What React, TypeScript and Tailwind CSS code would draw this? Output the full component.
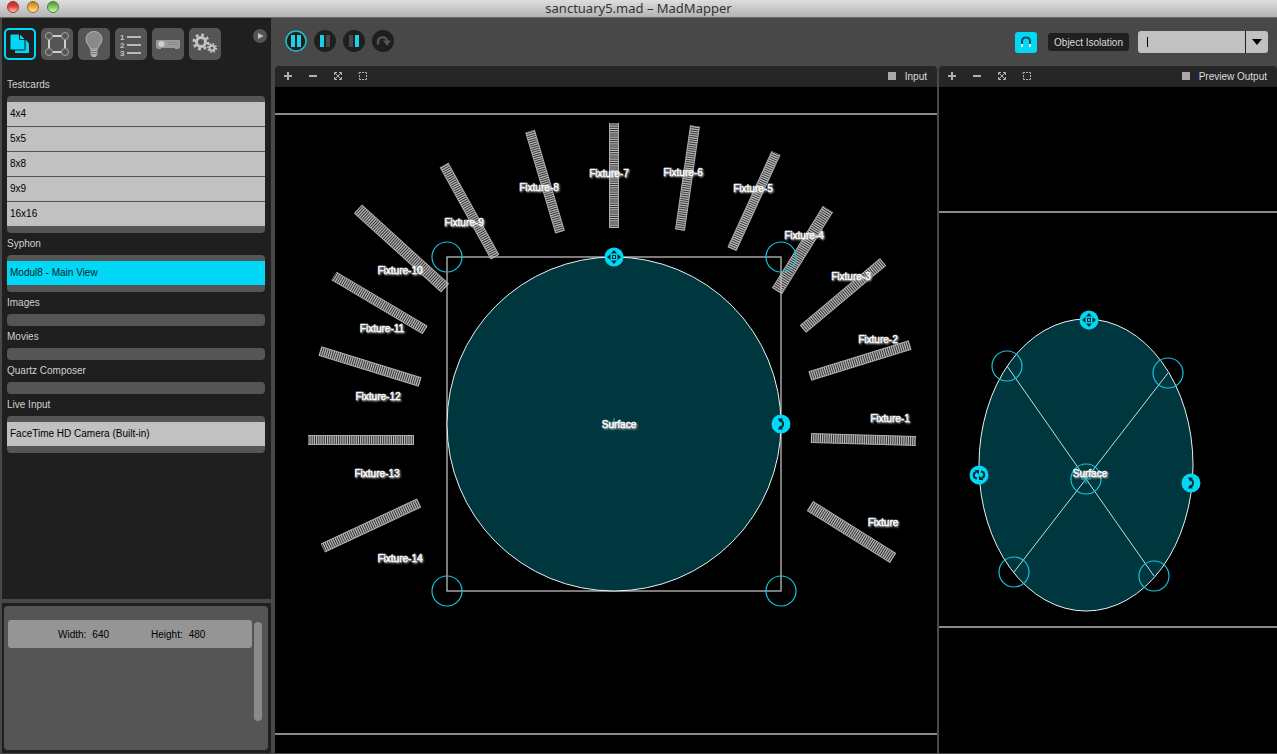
import React, { useState } from 'react';

type Fixture = {
  name: string;
  from: [number, number];
  to: [number, number];
  label: [number, number];
  thick?: number;
};

const FIXTURES: Fixture[] = [
  { name: 'Fixture', from: [810, 506], to: [893, 558], label: [883, 526], thick: 12 },
  { name: 'Fixture-1', from: [811, 438], to: [916, 441], label: [890, 422] },
  { name: 'Fixture-2', from: [810, 376], to: [910, 345], label: [878, 343] },
  { name: 'Fixture-3', from: [803, 329], to: [883, 262], label: [851, 280] },
  { name: 'Fixture-4', from: [777, 291], to: [828, 209], label: [804, 239], thick: 12 },
  { name: 'Fixture-5', from: [732, 249], to: [776, 153], label: [753, 192] },
  { name: 'Fixture-6', from: [680, 230], to: [695, 126], label: [683, 176] },
  { name: 'Fixture-7', from: [614, 228], to: [614, 123], label: [609, 177] },
  { name: 'Fixture-8', from: [560, 232], to: [530, 131], label: [539, 191] },
  { name: 'Fixture-9', from: [495, 257], to: [444, 165], label: [464, 226] },
  { name: 'Fixture-10', from: [445, 288], to: [358, 209], label: [400, 274], thick: 12 },
  { name: 'Fixture-11', from: [425, 330], to: [334, 276], label: [382, 332] },
  { name: 'Fixture-12', from: [420, 382], to: [320, 351], label: [378, 400] },
  { name: 'Fixture-13', from: [414, 440], to: [308, 440], label: [377, 477] },
  { name: 'Fixture-14', from: [419, 503], to: [323, 548], label: [400, 562] },
];

const MEDIA = [
  { title: 'Testcards', items: ['4x4', '5x5', '8x8', '9x9', '16x16'] },
  { title: 'Syphon', items: ['Modul8 - Main View'] },
  { title: 'Images', items: [] },
  { title: 'Movies', items: [] },
  { title: 'Quartz Composer', items: [] },
  { title: 'Live Input', items: ['FaceTime HD Camera (Built-in)'] },
];

const MediaIcon = () => (
  <svg viewBox="0 0 32 32" className="h-full w-full" fill="#00d8f5">
    <path d="M11 11h9l5 5v9H11z" />
    <path d="M6 6h10l5 5v11H6z" stroke="#1f1f1f" />
    <path d="M15.500 6v5.500H21" fill="none" stroke="#1f1f1f" />
    <path d="M22 12l3 3.500h-3z" />
  </svg>
);

const SurfaceIcon = () => (
  <svg viewBox="0 0 32 32" className="h-full w-full" fill="none" stroke="#cfcfcf">
    <path d="M12 8h9M12 24h9M8 12v8M24 12v8" strokeWidth="2" />
    <g stroke="#a6a6a6">
      <circle cx="8" cy="8" r="3.500" />
      <circle cx="24" cy="8" r="3.500" />
      <circle cx="8" cy="24" r="3.500" />
      <circle cx="24" cy="24" r="3.500" />
    </g>
  </svg>
);

const BulbIcon = () => (
  <svg viewBox="0 0 32 32" className="h-full w-full">
    <path
      d="M16 3.500c-4.700 0-8 3.500-8 8 0 4 3.200 5.500 4.500 9.500h7c1.300-4 4.500-5.500 4.500-9.500 0-4.500-3.300-8-8-8z"
      fill="#8a8a8a"
      stroke="#b5b5b5"
    />
    <path d="M12.500 21.500h7v5L17.500 29h-3l-2-2.500z" fill="#b5b5b5" />
    <path d="M12.500 23.500h7M12.500 25.500h7" stroke="#777" />
  </svg>
);

const ListIcon = () => (
  <svg viewBox="0 0 32 32" className="h-full w-full">
    <path d="M12 9h14M12 17h14M12 25h14" stroke="#b9b9b9" strokeWidth="2" />
    <g fill="#c4c4c4" fontSize="8" fontWeight="bold" fontFamily="Liberation Sans, sans-serif">
      <text x="5" y="12">1</text>
      <text x="5" y="20">2</text>
      <text x="5" y="28">3</text>
    </g>
  </svg>
);

const ProjectorIcon = () => (
  <svg viewBox="0 0 32 32" className="h-full w-full">
    <rect x="4" y="12" width="24" height="8" rx="1" fill="#9a9a9a" />
    <path d="M5 20h4v1H5zM23 20h4v1h-4z" fill="#9a9a9a" />
    <circle cx="9.500" cy="16" r="3" fill="#cfcfcf" />
    <path d="M16 14.500h10M16 16.500h10" stroke="#8a8a8a" />
  </svg>
);

const GearsIcon = () => (
  <svg viewBox="0 0 32 32" className="h-full w-full" fill="none" stroke="#c4c4c4">
    <circle cx="12" cy="14" r="4.500" strokeWidth="3" />
    <circle cx="12" cy="14" r="7" strokeWidth="3" strokeDasharray="2.750 2.750" />
    <circle cx="23" cy="20" r="2.500" strokeWidth="2" />
    <circle cx="23" cy="20" r="4" strokeWidth="2" strokeDasharray="1.570 1.570" />
  </svg>
);

const TOOLS = [
  { name: 'Medias', Icon: MediaIcon },
  { name: 'Surfaces', Icon: SurfaceIcon },
  { name: 'Fixtures', Icon: BulbIcon },
  { name: 'Cues', Icon: ListIcon },
  { name: 'Projectors', Icon: ProjectorIcon },
  { name: 'Preferences', Icon: GearsIcon },
];

const TitleBar = () => (
  <header className="relative h-[18px] shrink-0 border-b border-[#6a6a6a] bg-linear-to-b from-[#dedede] to-[#b4b4b4]">
    <div className="absolute left-[7px] top-px flex gap-2">
      {[
        { name: 'Close', cls: 'from-[#b02c2c] via-[#e8453f] to-[#ffc0b4] border-[#8f3a38]' },
        { name: 'Minimize', cls: 'from-[#c07c1c] via-[#f0ac40] to-[#ffeaa0] border-[#95692f]' },
        { name: 'Zoom', cls: 'from-[#4f9a35] via-[#82c862] to-[#d8f8b4] border-[#4f7f40]' },
      ].map((b) => (
        <button key={b.name} aria-label={b.name} className={`h-3 w-3 rounded-full border bg-linear-to-b ${b.cls}`} />
      ))}
    </div>
    <h1 className="text-center font-['Noto_Sans',sans-serif] text-[13px] leading-4 text-[#333]">sanctuary5.mad – MadMapper</h1>
  </header>
);

const Sidebar = () => {
  const [tool, setTool] = useState('Medias');
  const [selected, setSelected] = useState('Modul8 - Main View');

  return (
    <aside className="flex w-[269px] shrink-0 flex-col gap-1">
      <section className="flex-1 bg-[#1f1f1f] pt-[10px]">
        <div className="mb-[14px] flex items-start justify-between pl-[2px] pr-1">
          <nav className="flex gap-[5px]">
            {TOOLS.map(({ name, Icon }) => (
              <button
                key={name}
                aria-label={name}
                onClick={() => setTool(name)}
                className={
                  tool === name
                    ? 'h-8 w-8 rounded-[5px] bg-[#1f1f1f] ring-2 ring-inset ring-[#00d8f5]'
                    : 'h-8 w-8 rounded-[5px] bg-[#555]'
                }
              >
                <Icon />
              </button>
            ))}
          </nav>
          <button aria-label="Collapse" className="h-4 w-[14px]">
            <svg viewBox="0 0 14 16" className="h-full w-full">
              <circle cx="7" cy="8" r="7" fill="#555" />
              <path d="M5 5l5.500 3L5 11z" fill="#c4c4c4" />
            </svg>
          </button>
        </div>
        <div className="pl-[5px] pr-[6px]">
          {MEDIA.map((group) => (
            <div key={group.title}>
              <h2 className="h-[22px] leading-[22px] text-[#d0d0d0]">{group.title}</h2>
              {group.items.length ? (
                <ul className="divide-y divide-[#555] rounded-[4px] bg-[#555] pb-[7px] pt-[6px]">
                  {group.items.map((item) => (
                    <li key={item}>
                      <button
                        onClick={() => setSelected(item)}
                        className={
                          selected === item
                            ? 'block h-6 w-full bg-[#00d8f5] pl-[3px] text-left leading-6 text-[#06252b]'
                            : 'block h-6 w-full bg-[#c1c1c1] pl-[3px] text-left leading-6 text-black'
                        }
                      >
                        {item}
                      </button>
                    </li>
                  ))}
                </ul>
              ) : (
                <div className="h-3 rounded-[4px] bg-[#555]" />
              )}
            </div>
          ))}
        </div>
      </section>

      <section className="h-[150px] shrink-0 bg-[#1f1f1f] py-[3px] pl-[2px] pr-[3px]">
        <div className="flex h-full gap-[2px] rounded-[4px] bg-[#555] pl-1 pr-[6px]">
          <dl className="mt-[14px] flex h-7 flex-1 items-center gap-[42px] rounded-[3px] bg-[#959595] pl-[50px] text-black">
            <div className="flex gap-[6px]">
              <dt>Width:</dt>
              <dd>640</dd>
            </div>
            <div className="flex gap-[6px]">
              <dt>Height:</dt>
              <dd>480</dd>
            </div>
          </dl>
          <div className="mt-4 h-[99px] w-2 rounded-full bg-[#8a8a8a]" />
        </div>
      </section>
    </aside>
  );
};

const PauseIcon = ({ left, right, ring }: { left: boolean; right: boolean; ring?: boolean }) => (
  <svg viewBox="0 0 22 22" className="h-full w-full">
    <circle cx="11" cy="11" r={ring ? 10 : 11} fill="#1f1f1f" stroke={ring ? '#22bdd0' : 'none'} strokeWidth="1.500" />
    <rect x="6" y="5" width="4" height="12" fill={left ? '#1ccfe6' : '#484848'} />
    <rect x="12" y="5" width="4" height="12" fill={right ? '#1ccfe6' : '#484848'} />
  </svg>
);

const TopBar = () => (
  <div className="flex h-12 shrink-0 items-center justify-between pl-[10px] pr-[9px]">
    <div className="flex gap-[7px] pb-[2px]">
      <button aria-label="Pause all" className="h-[22px] w-[22px]"><PauseIcon left right ring /></button>
      <button aria-label="Pause input" className="h-[22px] w-[22px]"><PauseIcon left right={false} /></button>
      <button aria-label="Pause output" className="h-[22px] w-[22px]"><PauseIcon left={false} right /></button>
      <button aria-label="Redo" className="h-[22px] w-[22px]">
        <svg viewBox="0 0 22 22" className="h-full w-full">
          <circle cx="11" cy="11" r="11" fill="#1f1f1f" />
          <path d="M6 14.500v-2.500c0-6 8.500-6 9-1" fill="none" stroke="#555" strokeWidth="2.500" />
          <path d="M11 10.500h8L15 16z" fill="#555" />
        </svg>
      </button>
    </div>
    <div className="flex items-center">
      <button aria-label="Snap" className="mr-[11px] h-[21px] w-[22px] rounded-[3px] bg-[#00d8f5]">
        <svg viewBox="0 0 22 21" className="h-full w-full" fill="none" strokeWidth="2">
          <path d="M7 12v-2.500c0-5.300 8-5.300 8 0V12" stroke="#064f59" />
          <path d="M7 12v3M15 12v3" stroke="#fff" />
        </svg>
      </button>
      <button className="mr-[9px] h-[18px] rounded-[3px] bg-[#1f1f1f] px-[6px] text-[#dcdcdc]">Object Isolation</button>
      <div className="flex h-[22px] w-[130px] items-center overflow-hidden rounded-[3px] bg-[#c1c1c1]">
        <span className="ml-[9px] h-[10px] w-px bg-black" />
        <input aria-label="Isolated object" className="h-full min-w-0 flex-1 bg-transparent px-1 text-black outline-none" />
        <button aria-label="Show objects" className="flex h-full w-[23px] items-center justify-center border-l border-[#222]">
          <svg viewBox="0 0 10 6" className="h-[6px] w-[10px]">
            <path d="M0 0h10L5 6z" fill="#000" />
          </svg>
        </button>
      </div>
    </div>
  </div>
);

const ViewBar = ({ title }: { title: string }) => (
  <div className="flex h-[21px] shrink-0 items-center justify-between rounded-t-[4px] bg-[#262626] pb-px pl-2 pr-[10px]">
    <div className="flex gap-[15px]">
      <button aria-label="Zoom in" className="h-[10px] w-[10px]">
        <svg viewBox="0 0 10 10" className="h-full w-full" stroke="#b0b0b0" strokeWidth="2"><path d="M1 5h8M5 1v8" /></svg>
      </button>
      <button aria-label="Zoom out" className="h-[10px] w-[10px]">
        <svg viewBox="0 0 10 10" className="h-full w-full" stroke="#b0b0b0" strokeWidth="2"><path d="M1 5h8" /></svg>
      </button>
      <button aria-label="Fit to view" className="h-[10px] w-[10px]">
        <svg viewBox="0 0 10 10" className="h-full w-full" fill="none" stroke="#b0b0b0">
          <path d="M1.500 4V1.500H4M6 1.500h2.500V4M8.500 6v2.500H6M4 8.500H1.500V6M1.500 1.500l7 7M8.500 1.500l-7 7" />
        </svg>
      </button>
      <button aria-label="Fit selection" className="h-[10px] w-[10px]">
        <svg viewBox="0 0 10 10" className="h-full w-full" fill="none" stroke="#b0b0b0">
          <path d="M1 3V1.500H3M7 1.500h1.500V3M8.500 7v1.500H7M3 8.500H1.500V7M4 1.500h2M4 8.500h2M1.500 4v2M8.500 4v2" />
        </svg>
      </button>
    </div>
    <button className="flex items-center gap-[9px] text-[#dcdcdc]">
      <span className="h-2 w-2 bg-[#a9a9ab]" />
      {title}
    </button>
  </div>
);

const Ring = ({ x, y }: { x: number; y: number }) => (
  <circle cx={x} cy={y} r="15" fill="none" stroke="#14c4dc" strokeWidth="1.200" />
);

const Handle = ({ x, y, kind }: { x: number; y: number; kind: 'move' | 'scale' | 'rotate' }) => (
  <g transform={`translate(${x} ${y})`}>
    <circle r="9.500" fill="#00d8f5" />
    {kind === 'move' && (
      <g fill="#022a30">
        <rect x="-1.500" y="-1.500" width="3" height="3" fill="none" stroke="#022a30" />
        <path d="M0-7l3 3.500h-6zM0 7l3-3.500h-6zM-7 0l3.500-3v6zM7 0l-3.500-3v6z" />
      </g>
    )}
    {kind === 'scale' && (
      <g fill="#022a30">
        <path d="M-.5-3.500C1.500-3 2-1.500 2 0S1.500 3-.5 3.500" fill="none" stroke="#022a30" strokeWidth="2" />
        <path d="M-3-5.500h5L-1-1.500zM-3 5.500h5L-1 1.500z" />
      </g>
    )}
    {kind === 'rotate' && (
      <g fill="#022a30">
        <path d="M-2 3.500C-6.500 3-6-2.500-2.500-3M2-3.500C6.500-3 6 2.500 2.500 3" fill="none" stroke="#022a30" strokeWidth="2" />
        <path d="M-4.500-5H0v4.500zM4.500 5H0V.5z" />
      </g>
    )}
  </g>
);

const Label = ({ x, y, children }: { x: number; y: number; children: string }) => (
  <text
    x={x}
    y={y}
    textAnchor="middle"
    fill="#fff"
    stroke="#fff"
    strokeWidth="0.500"
    className="text-[10px] [text-shadow:1px_1px_2px_#aaa]"
  >
    {children}
  </text>
);

const FixtureBar = ({ fixture }: { fixture: Fixture }) => {
  const [x1, y1] = fixture.from;
  const [x2, y2] = fixture.to;
  const thick = fixture.thick || 10;
  return (
    <g>
      <line x1={x1} y1={y1} x2={x2} y2={y2} stroke="#a8a8a8" strokeWidth={thick} />
      <line x1={x1} y1={y1} x2={x2} y2={y2} stroke="#333" strokeWidth={thick - 2} />
      <line x1={x1} y1={y1} x2={x2} y2={y2} stroke="#b8b8b8" strokeWidth={thick - 1} strokeDasharray="1.200 1" />
    </g>
  );
};

const InputCanvas = () => (
  <svg viewBox="275 87 662 666" className="block min-h-0 w-full flex-1 bg-black">
    <path d="M275 114h662M275 734h662" stroke="#8a8a8a" strokeWidth="2" />
    {FIXTURES.map((f) => <FixtureBar key={f.name} fixture={f} />)}
    <rect x="447" y="257" width="334" height="334" fill="none" stroke="#c0bcbf" strokeWidth="1.300" />
    <circle cx="614" cy="424" r="167" fill="#00363e" stroke="#e8f4f5" />
    <path d="M610 424h8M614 418v8" stroke="#12b4ca" />
    <Ring x={447} y={257} />
    <Ring x={781} y={257} />
    <Ring x={447} y={591} />
    <Ring x={781} y={591} />
    <Handle x={614} y={257} kind="move" />
    <Handle x={781} y={424} kind="scale" />
    {FIXTURES.map((f) => <Label key={f.name} x={f.label[0]} y={f.label[1]}>{f.name}</Label>)}
    <Label x={619} y={428}>Surface</Label>
  </svg>
);

const OutputCanvas = () => (
  <svg viewBox="939 87 338 666" className="block min-h-0 w-full flex-1 bg-black">
    <path d="M939 212h338M939 627h338" stroke="#8a8a8a" strokeWidth="2" />
    <ellipse cx="1086" cy="465" rx="107" ry="146" fill="#00363e" stroke="#e8f4f5" />
    <path d="M1007 366l79 113l68 97M1168 373l-82 106l-72 93" fill="none" stroke="#b4e4ea" />
    <path d="M1081 479h10M1086 474v10" stroke="#12b4ca" />
    <Ring x={1007} y={366} />
    <Ring x={1168} y={373} />
    <Ring x={1014} y={572} />
    <Ring x={1154} y={576} />
    <Ring x={1086} y={479} />
    <Handle x={1089} y={320} kind="move" />
    <Handle x={979} y={475} kind="rotate" />
    <Handle x={1191} y={483} kind="scale" />
    <Label x={1090} y={477}>Surface</Label>
  </svg>
);

const App: React.FC = () => (
  <div className="flex h-screen flex-col overflow-hidden bg-[#484848] font-['Liberation_Sans',Arial,sans-serif] text-[10px]">
    <TitleBar />
    <div className="flex min-h-0 flex-1 gap-1 pb-px pl-[2px]">
      <Sidebar />
      <main className="flex min-w-0 flex-1 flex-col">
        <TopBar />
        <div className="flex min-h-0 flex-1 gap-[2px]">
          <section className="flex min-w-0 flex-[662] flex-col">
            <ViewBar title="Input" />
            <InputCanvas />
          </section>
          <section className="flex min-w-0 flex-[338] flex-col">
            <ViewBar title="Preview Output" />
            <OutputCanvas />
          </section>
        </div>
      </main>
    </div>
  </div>
);

export default App;
